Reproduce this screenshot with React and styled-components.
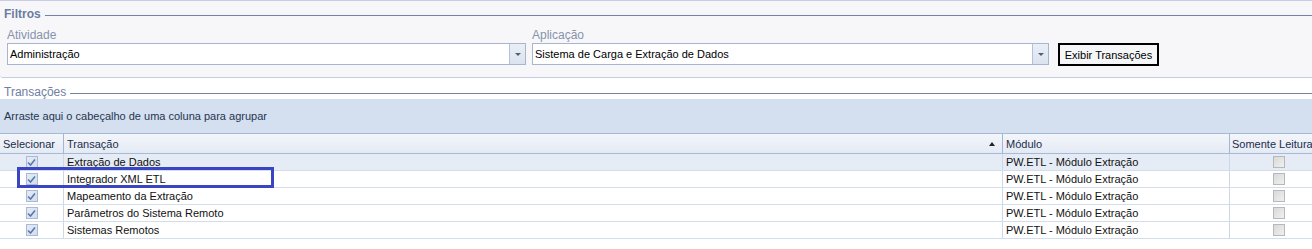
import React from 'react';
import styled, { createGlobalStyle } from 'styled-components';

const GlobalStyle = createGlobalStyle`
  html, body {
    margin: 0;
    padding: 0;
    background: #ffffff;
  }
  body {
    font-family: 'Liberation Sans', Tahoma, Arial, sans-serif;
    font-size: 11px;
    color: #000;
    overflow: hidden;
  }
`;

const rows = [
  { name: 'Extração de Dados', module: 'PW.ETL - Módulo Extração', focused: true },
  { name: 'Integrador XML ETL', module: 'PW.ETL - Módulo Extração', marked: true },
  { name: 'Mapeamento da Extração', module: 'PW.ETL - Módulo Extração' },
  { name: 'Parâmetros do Sistema Remoto', module: 'PW.ETL - Módulo Extração' },
  { name: 'Sistemas Remotos', module: 'PW.ETL - Módulo Extração' },
];

const Combo = ({ width, value }) => (
  <ComboBox $width={width}>
    <ComboText>{value}</ComboText>
    <ComboButton>
      <DownArrow />
    </ComboButton>
  </ComboBox>
);

const CheckBox = ({ checked }) => (
  <Check $checked={checked}>
    {checked && (
      <svg width="9" height="9" viewBox="0 0 9 9">
        <path d="M1 4.5 L3.5 7 L8 1.5" fill="none" stroke="#5a79ab" strokeWidth="1.6" />
      </svg>
    )}
  </Check>
);

let App = () => {
  return (
    <Page>
      <GlobalStyle />
      <FilterPanel>
        <SectionTitle $bold>
          <span>Filtros</span>
          <Rule />
        </SectionTitle>
        <FieldsRow>
          <Field>
            <Label>Atividade</Label>
            <Combo width={519} value="Administração" />
          </Field>
          <Field>
            <Label>Aplicação</Label>
            <Combo width={517} value="Sistema de Carga e Extração de Dados" />
          </Field>
          <ShowButton>Exibir Transações</ShowButton>
        </FieldsRow>
      </FilterPanel>

      <SectionTitle $spaced>
        <span>Transações</span>
        <Rule />
      </SectionTitle>

      <GroupPanel>Arraste aqui o cabeçalho de uma coluna para agrupar</GroupPanel>

      <Grid>
        <HeaderRow>
          <HeadCell>Selecionar</HeadCell>
          <HeadCell $sorted>
            <span>Transação</span>
            <SortUp />
          </HeadCell>
          <HeadCell>Módulo</HeadCell>
          <HeadCell $tight>Somente Leitura</HeadCell>
        </HeaderRow>
        {rows.map(row => (
          <Row key={row.name} $focused={row.focused}>
            <Cell $center>
              <CheckBox checked />
            </Cell>
            <Cell>{row.name}</Cell>
            <Cell>{row.module}</Cell>
            <Cell $center>
              <CheckBox />
            </Cell>
          </Row>
        ))}
        <Marker />
      </Grid>
    </Page>
  );
};

export default App;

const Page = styled.div`
  width: 1312px;
  height: 249px;
  overflow: hidden;
`;

const FilterPanel = styled.div`
  box-sizing: border-box;
  height: 78px;
  background: #f7f7fa;
  border-top: 1px solid #c9cce4;
  border-bottom: 1px solid #c6cbe4;
  border-bottom-left-radius: 3px;
`;

const SectionTitle = styled.div`
  display: flex;
  align-items: center;
  height: 14px;
  margin-top: ${p => (p.$spaced ? '7px' : '6px')};
  padding-left: 4px;
  color: ${p => (p.$bold ? '#6a7ca0' : '#6f80a1')};
  font-weight: ${p => (p.$bold ? 'bold' : 'normal')};
  font-size: 12px;

  span {
    white-space: nowrap;
    padding-right: 4px;
  }
`;

const Rule = styled.div`
  flex: 1;
  height: 1px;
  margin-top: 3px;
  background: #7284a6;
`;

const FieldsRow = styled.div`
  display: flex;
  align-items: flex-end;
  margin-top: 7px;
  padding-left: 7px;
  gap: 6px;
`;

const Field = styled.div`
  display: flex;
  flex-direction: column;
`;

const Label = styled.div`
  height: 14px;
  line-height: 14px;
  margin-bottom: 1px;
  color: #8693ab;
  font-size: 12px;
`;

const ComboBox = styled.div`
  box-sizing: border-box;
  display: flex;
  width: ${p => p.$width}px;
  height: 22px;
  background: #ffffff;
  border: 1px solid #a7b6cf;
`;

const ComboText = styled.div`
  flex: 1;
  padding-left: 2px;
  line-height: 20px;
  font-size: 11px;
  white-space: nowrap;
`;

const ComboButton = styled.div`
  width: 15px;
  display: flex;
  align-items: center;
  justify-content: center;
  border-left: 1px solid #b4c2d9;
  background: linear-gradient(#eaeff7, #dbe3ef);
`;

const DownArrow = styled.div`
  width: 0;
  height: 0;
  border-left: 3px solid transparent;
  border-right: 3px solid transparent;
  border-top: 3px solid #55606f;
`;

const ShowButton = styled.div`
  box-sizing: border-box;
  width: 101px;
  height: 23px;
  margin-left: 3px;
  margin-bottom: -1px;
  display: flex;
  align-items: center;
  justify-content: center;
  border: 2px solid #000;
  background: #f5f6f8;
  font-size: 11px;
  white-space: nowrap;
`;

const GroupPanel = styled.div`
  box-sizing: border-box;
  height: 34px;
  padding-left: 4px;
  display: flex;
  align-items: center;
  background: #d4dfef;
  color: #24354f;
  font-size: 11px;
`;

const Grid = styled.div`
  position: relative;
  width: 1312px;
  overflow: hidden;
`;

const columns = '64px 939px 227px 98px';

const HeaderRow = styled.div`
  box-sizing: border-box;
  display: grid;
  grid-template-columns: ${columns};
  height: 21px;
  border-top: 1px solid #a6b9d7;
  border-bottom: 1px solid #a6b9d7;
  background: linear-gradient(#f3f6fb, #e4eaf4);
`;

const HeadCell = styled.div`
  box-sizing: border-box;
  display: flex;
  align-items: center;
  justify-content: ${p => (p.$sorted ? 'space-between' : 'flex-start')};
  padding: 0 ${p => (p.$sorted ? '7px' : '0')} 0 ${p => (p.$tight ? '2px' : '3px')};
  border-right: 1px solid #a3b6d4;
  color: #1c2d4a;
  white-space: nowrap;
  overflow: hidden;
`;

const SortUp = styled.div`
  width: 0;
  height: 0;
  border-left: 3px solid transparent;
  border-right: 3px solid transparent;
  border-bottom: 4px solid #222;
`;

const Row = styled.div`
  box-sizing: border-box;
  display: grid;
  grid-template-columns: ${columns};
  height: 17px;
  border-bottom: 1px solid #d3ddec;
  background: ${p => (p.$focused ? '#e6ecf5' : '#ffffff')};
`;

const Cell = styled.div`
  box-sizing: border-box;
  display: flex;
  align-items: center;
  justify-content: ${p => (p.$center ? 'center' : 'flex-start')};
  padding-left: ${p => (p.$center ? '0' : '3px')};
  border-right: 1px solid #cbd8eb;
  color: #111;
  white-space: nowrap;
  overflow: hidden;
`;

const Check = styled.div`
  box-sizing: border-box;
  width: 12px;
  height: 12px;
  display: flex;
  align-items: center;
  justify-content: center;
  border: 1px solid ${p => (p.$checked ? '#a9bad6' : '#b8b8b8')};
  background: ${p =>
    p.$checked
      ? 'linear-gradient(135deg, #e4ebf5, #d3ddec)'
      : 'linear-gradient(135deg, #d9d9d9, #f0f0f0)'};
`;

const Marker = styled.div`
  position: absolute;
  left: 17px;
  top: 34px;
  width: 257px;
  height: 21px;
  box-sizing: border-box;
  border: 3px solid #3a45c3;
  pointer-events: none;
`;
